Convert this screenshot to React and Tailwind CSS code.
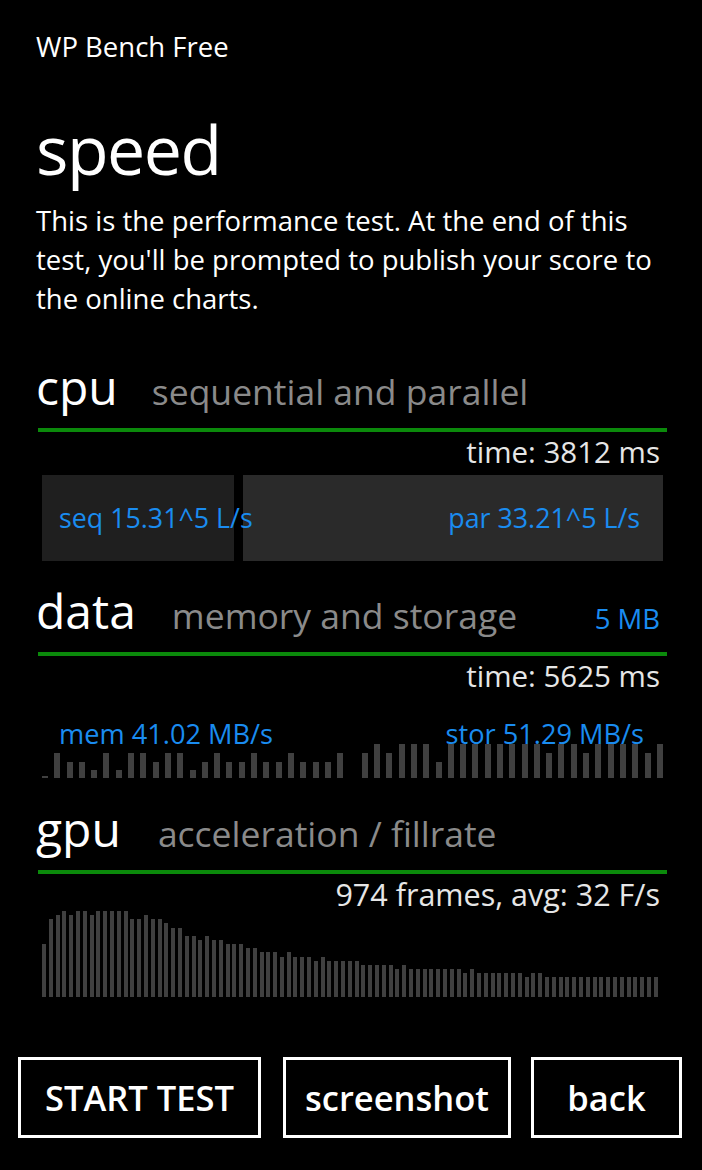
import React from 'react';

const dataBars = [
  2, 25, 16, 16, 8, 25, 8, 25, 25, 16, 25, 25, 8, 16, 25, 16, 16, 25, 16, 16, 25, 16, 16, 16, 25,
  0, 25, 34, 25, 34, 34, 34, 16,
  34, 34, 34, 34, 34, 34, 34, 34, 25, 34, 34, 25, 34, 34, 34, 34, 25, 34,
];

const gpuBars = [
  53, 78, 82, 86, 82, 86, 86, 82, 86, 86, 86, 86, 86, 78, 78, 82, 78, 78, 74, 69, 69, 61, 61, 57, 61,
  57, 57, 53, 53, 53, 49, 49, 45, 45, 45, 40, 45, 40, 40, 40, 36, 40, 36, 36, 36, 36, 36, 32, 32, 32,
  32, 32, 28, 32, 28, 28, 28, 28, 28, 28, 28, 28, 24, 28, 24, 24, 24, 24, 24, 24, 24, 20, 24, 24,
  20, 20, 20, 20, 20, 20, 20, 20, 20, 20, 20, 20, 20, 20, 20, 20, 20,
];

function SectionHead({ title, sub, gap, extra }) {
  return (
    <div className="flex items-baseline h-[68px] pt-[3px]">
      <span className="text-[48px] leading-none text-white">{title}</span>
      <span className={`text-[35.5px] leading-none text-[#8a8a8a] ${gap}`}>{sub}</span>
      {extra && <span className="ml-auto mr-[7px] text-[27.5px] leading-none text-[#1a8cf0]">{extra}</span>}
    </div>
  );
}

function GreenLine() {
  return <div className="ml-[2px] h-[4px] w-[629px] bg-[#0b8a0b]" />;
}

function RightText({ children, size = 'text-[29.5px]' }) {
  return <div className={`pr-[7px] text-right ${size} leading-[40px] text-[#e6e6e6]`}>{children}</div>;
}

export default function App() {
  return (
    <div className="w-[702px] h-[1170px] bg-black text-white overflow-hidden" style={{ fontFamily: '"Open Sans", "Noto Sans", sans-serif' }}>
      <div className="pl-[36px] pr-[35px]">
        <div className="pt-[30px] text-[27.5px] leading-[34px]">WP Bench Free</div>

        <div className="mt-[45px] text-[68px] leading-[80px] tracking-[-1.5px]">speed</div>

        <p className="mt-[12px] text-[27.5px] leading-[39px]">
          This is the performance test. At the end of this test, you'll be prompted to publish your score to the online charts.
        </p>

        {/* cpu */}
        <div className="mt-[42px]">
          <SectionHead title="cpu" sub="sequential and parallel" gap="ml-[34px]" />
          <GreenLine />
          <RightText>time: 3812 ms</RightText>
          <div className="mt-[3px] ml-[6px] flex gap-[9px] h-[86px]">
            <div className="relative z-10 w-[192px] shrink-0 bg-[#1f1f1f] flex items-center pl-[17px] whitespace-nowrap text-[26.8px] text-[#1a8cf0]">
              seq 15.31^5 L/s
            </div>
            <div className="w-[420px] shrink-0 bg-[#2a2a2a] flex items-center justify-end pr-[23px] whitespace-nowrap text-[26.8px] text-[#1a8cf0]">
              par 33.21^5 L/s
            </div>
          </div>
        </div>

        {/* data */}
        <div className="mt-[23px]">
          <SectionHead title="data" sub="memory and storage" gap="ml-[36px]" extra="5 MB" />
          <GreenLine />
          <RightText>time: 5625 ms</RightText>
          <div className="relative mt-[21px] ml-[6px] w-[621px] h-[61px] flex items-end justify-between">
            {dataBars.map((h, i) => (
              <div key={i} className="w-[6px] bg-[#404040]" style={{ height: h }} />
            ))}
            <span className="absolute left-[17px] top-0 text-[27.2px] leading-[34px] text-[#1a8cf0]">mem 41.02 MB/s</span>
            <span className="absolute right-[19px] top-0 text-[27.2px] leading-[34px] text-[#1a8cf0]">stor 51.29 MB/s</span>
          </div>
        </div>

        {/* gpu */}
        <div className="mt-[24px]">
          <SectionHead title="gpu" sub="acceleration / fillrate" gap="ml-[37px]" />
          <GreenLine />
          <RightText size="text-[30.5px]">974 frames, avg: 32 F/s</RightText>
          <div className="mt-[-9px] ml-[6px] w-[616px] h-[92px] flex items-end justify-between">
            {gpuBars.map((h, i) => (
              <div key={i} className="w-[4px] bg-[#404040]" style={{ height: h }} />
            ))}
          </div>
        </div>
      </div>

      <div className="mt-[60px] flex pl-[18px]">
        <button className="w-[243px] h-[81px] border-[3px] border-white text-[34.5px] font-semibold">START TEST</button>
        <button className="ml-[22px] w-[228px] h-[81px] border-[3px] border-white text-[34.5px] font-semibold">screenshot</button>
        <button className="ml-[20px] w-[151px] h-[81px] border-[3px] border-white text-[34.5px] font-semibold">back</button>
      </div>
    </div>
  );
}
